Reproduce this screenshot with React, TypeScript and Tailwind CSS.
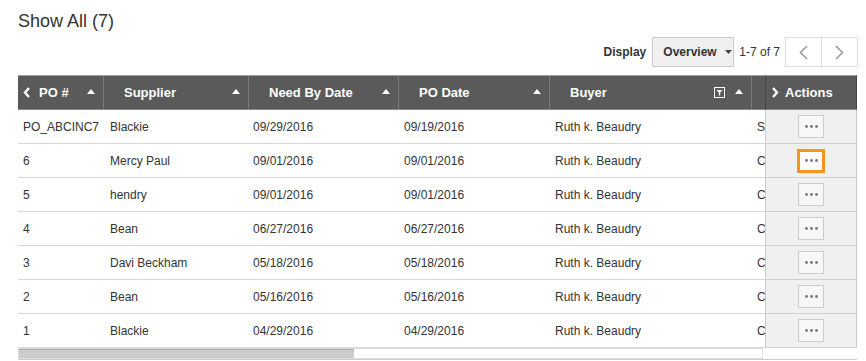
import React from "react";

type Row = { po: string; supplier: string; needBy: string; poDate: string; buyer: string; extra: string };

const rows: Row[] = [
	{ po: "PO_ABCINC7", supplier: "Blackie", needBy: "09/29/2016", poDate: "09/19/2016", buyer: "Ruth k. Beaudry", extra: "S" },
	{ po: "6", supplier: "Mercy Paul", needBy: "09/01/2016", poDate: "09/01/2016", buyer: "Ruth k. Beaudry", extra: "C" },
	{ po: "5", supplier: "hendry", needBy: "09/01/2016", poDate: "09/01/2016", buyer: "Ruth k. Beaudry", extra: "C" },
	{ po: "4", supplier: "Bean", needBy: "06/27/2016", poDate: "06/27/2016", buyer: "Ruth k. Beaudry", extra: "C" },
	{ po: "3", supplier: "Davi Beckham", needBy: "05/18/2016", poDate: "05/18/2016", buyer: "Ruth k. Beaudry", extra: "C" },
	{ po: "2", supplier: "Bean", needBy: "05/16/2016", poDate: "05/16/2016", buyer: "Ruth k. Beaudry", extra: "C" },
	{ po: "1", supplier: "Blackie", needBy: "04/29/2016", poDate: "04/29/2016", buyer: "Ruth k. Beaudry", extra: "C" },
];

const SortUp = () => (
	<svg width="8" height="5" viewBox="0 0 8 5" className="shrink-0 -mt-[3px]">
		<path d="M0 5 L4 0 L8 5 Z" fill="#ffffff" />
	</svg>
);

const FilterIcon = () => (
	<svg width="11" height="11" viewBox="0 0 11 11" className="shrink-0">
		<rect x="0.5" y="0.5" width="10" height="10" fill="none" stroke="#ffffff" strokeWidth="1" />
		<path d="M2.5 3 H8.5 L6.2 5.6 V8.5 H4.8 V5.6 Z" fill="#ffffff" />
	</svg>
);

const Chevron = ({ dir, color }: { dir: "left" | "right"; color: string }) => (
	<svg width="8" height="11" viewBox="0 0 8 11" className="shrink-0">
		{dir === "left" ? (
			<path d="M6 1 L2 5.5 L6 10" fill="none" stroke={color} strokeWidth="2.4" />
		) : (
			<path d="M2 1 L6 5.5 L2 10" fill="none" stroke={color} strokeWidth="2.4" />
		)}
	</svg>
);

const PagerChevron = ({ dir }: { dir: "left" | "right" }) => (
	<svg width="9" height="15" viewBox="0 0 9 15">
		<path d={dir === "left" ? "M8 1 L1.5 7.5 L8 14" : "M1 1 L7.5 7.5 L1 14"} fill="none" stroke="#9a9a9a" strokeWidth="1.6" />
	</svg>
);

const cols = [
	{ key: "po", w: "w-[86px]", label: "PO #", pl: "pl-[5px]" },
	{ key: "supplier", w: "w-[145px]", label: "Supplier", pl: "pl-[6px]" },
	{ key: "needBy", w: "w-[150px]", label: "Need By Date", pl: "pl-[4px]" },
	{ key: "poDate", w: "w-[151px]", label: "PO Date", pl: "pl-[5px]" },
	{ key: "buyer", w: "w-[202px]", label: "Buyer", pl: "pl-[5px]" },
	{ key: "extra", w: "w-[150px]", label: "", pl: "pl-[5px]" },
] as const;

export default function App() {
	return (
		<div className="w-[866px] h-[361px] bg-white overflow-hidden text-[#333333]" style={{ fontFamily: '"Liberation Sans", Arial, sans-serif' }}>
			<div className="pl-[18px] pt-[9px] text-[18px] leading-[24px]">Show All (7)</div>

			<div className="flex items-center justify-end pr-[8px] mt-[4px] h-[30px]">
				<span className="text-[12px] font-bold mr-[6px]">Display</span>
				<button className="h-[30px] w-[82px] bg-[#f0f0f0] border border-[#cccccc] flex items-center pl-[10px] text-[12px] font-bold text-[#333333]">
					Overview
					<svg width="7" height="4" viewBox="0 0 7 4" className="ml-[8px]">
						<path d="M0 0 H7 L3.5 4 Z" fill="#444444" />
					</svg>
				</button>
				<span className="text-[12px] ml-[5px] mr-[5px]">1-7 of 7</span>
				<div className="flex border border-[#dddddd] h-[30px]">
					<div className="w-[36px] flex items-center justify-center border-r border-[#dddddd]">
						<PagerChevron dir="left" />
					</div>
					<div className="w-[35px] flex items-center justify-center">
						<PagerChevron dir="right" />
					</div>
				</div>
			</div>

			<div className="flex ml-[18px] mt-[8px] w-[839px]">
				<div className="w-[747px] flex flex-col">
					<div className="w-[747px] overflow-hidden">
						<div className="flex w-max bg-[#5a5a5a] border-t border-[#a0a0a0] border-b border-b-[#8a8a8a] h-[35px] text-white text-[13px] font-bold">
							{cols.map((c, i) => (
								<div
									key={c.key}
									className={`${c.w} flex items-center shrink-0 ${i < cols.length - 1 ? "border-r border-[#7a7a7a]" : ""} ${i === 0 ? "pl-[5px]" : "pl-[20px]"} pr-[8px]`}
								>
									{i === 0 && (
										<span className="mr-[8px]">
											<Chevron dir="left" color="#ffffff" />
										</span>
									)}
									<span className="flex-1">{c.label}</span>
									{c.key === "buyer" && (
										<span className="mr-[10px]">
											<FilterIcon />
										</span>
									)}
									{c.label && <SortUp />}
								</div>
							))}
						</div>
						{rows.map((r, ri) => (
							<div key={ri} className="flex w-max h-[34px] border-b border-[#d6d6d6] text-[12px]">
								{cols.map((c) => (
									<div key={c.key} className={`${c.w} shrink-0 flex items-center ${c.pl} whitespace-nowrap overflow-hidden`}>
										{r[c.key as keyof Row]}
									</div>
								))}
							</div>
						))}
					</div>
					<div className="h-[11px] w-[745px] border border-[#dddddd] bg-white flex">
						<div className="w-[335px] h-full bg-[#cccccc] border-t border-[#aaaaaa]" />
					</div>
				</div>

				<div className="w-[92px] flex flex-col">
					<div className="h-[35px] bg-[#5a5a5a] border-t border-t-[#a0a0a0] border-b border-b-[#8a8a8a] border-l border-l-[#444444] border-r border-r-[#444444] flex items-center pl-[5px] text-white text-[13px] font-bold">
						<span className="mr-[6px]">
							<Chevron dir="right" color="#ffffff" />
						</span>
						Actions
					</div>
					<div className="bg-[#f0f0f0] border-l border-r border-[#cccccc]">
						{rows.map((_, ri) => (
							<div key={ri} className="h-[34px] border-b border-[#d0d0d0] flex items-center justify-center">
								<div
									className={`flex items-center justify-center ${
										ri === 1
											? "w-[28px] h-[24px] border-[3px] border-[#f7941d] bg-white"
											: "w-[26px] h-[23px] border border-[#cccccc] bg-[#f7f7f7]"
									}`}
								>
									<svg width="13" height="3" viewBox="0 0 13 3">
										<circle cx="1.5" cy="1.5" r="1.4" fill="#777777" />
										<circle cx="6.5" cy="1.5" r="1.4" fill="#777777" />
										<circle cx="11.5" cy="1.5" r="1.4" fill="#777777" />
									</svg>
								</div>
							</div>
						))}
					</div>
				</div>
			</div>
			<div className="ml-[18px] w-[839px] border-t border-[#cccccc]" />
		</div>
	);
}
